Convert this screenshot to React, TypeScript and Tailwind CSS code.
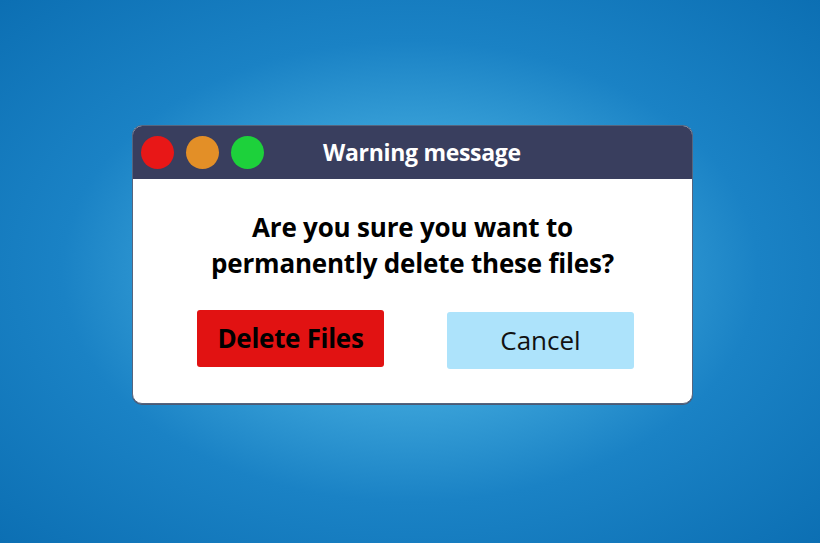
export default function App() {
  return (
    <div
      className="w-[820px] h-[543px] overflow-hidden pt-[125px] pl-[132px] bg-[radial-gradient(ellipse_at_50%_50%,#7dcdee_0%,#3ea6db_30%,#1a82c5_60%,#0c6fb3_100%)]"
      style={{ fontFamily: '"Open Sans", "Noto Sans", sans-serif' }}
    >
      <div className="w-[561px] rounded-[10px] overflow-hidden border border-[#55657f] bg-white shadow-[0_1px_0_#4a5a75]">
        {/* title bar */}
        <div className="h-[53px] bg-[#393e5e] flex items-center pl-[8px]">
          <div className="flex gap-[12px]">
            <span className="w-[33px] h-[33px] rounded-full bg-[#e81717]" />
            <span className="w-[33px] h-[33px] rounded-full bg-[#e38f27]" />
            <span className="w-[33px] h-[33px] rounded-full bg-[#1dd13b]" />
          </div>
          <span className="ml-[59px] text-white font-bold text-[23px] tracking-[-0.3px]">
            Warning message
          </span>
        </div>

        {/* body */}
        <div className="pt-[30px] pb-[34px]">
          <p className="text-center text-black font-bold text-[26px] leading-[36px] tracking-[-0.2px]">
            Are you sure you want to
            <br />
            permanently delete these files?
          </p>
          <div className="flex gap-[63px] pl-[64px] mt-[29px]">
            <button className="w-[187px] h-[57px] rounded-[3px] bg-[#e11212] text-black font-bold text-[26px] tracking-[-0.3px]">
              Delete Files
            </button>
            <button className="w-[187px] h-[57px] mt-[2px] rounded-[3px] bg-[#ade3fb] text-[#111] text-[26px]">
              Cancel
            </button>
          </div>
        </div>
      </div>
    </div>
  );
}
